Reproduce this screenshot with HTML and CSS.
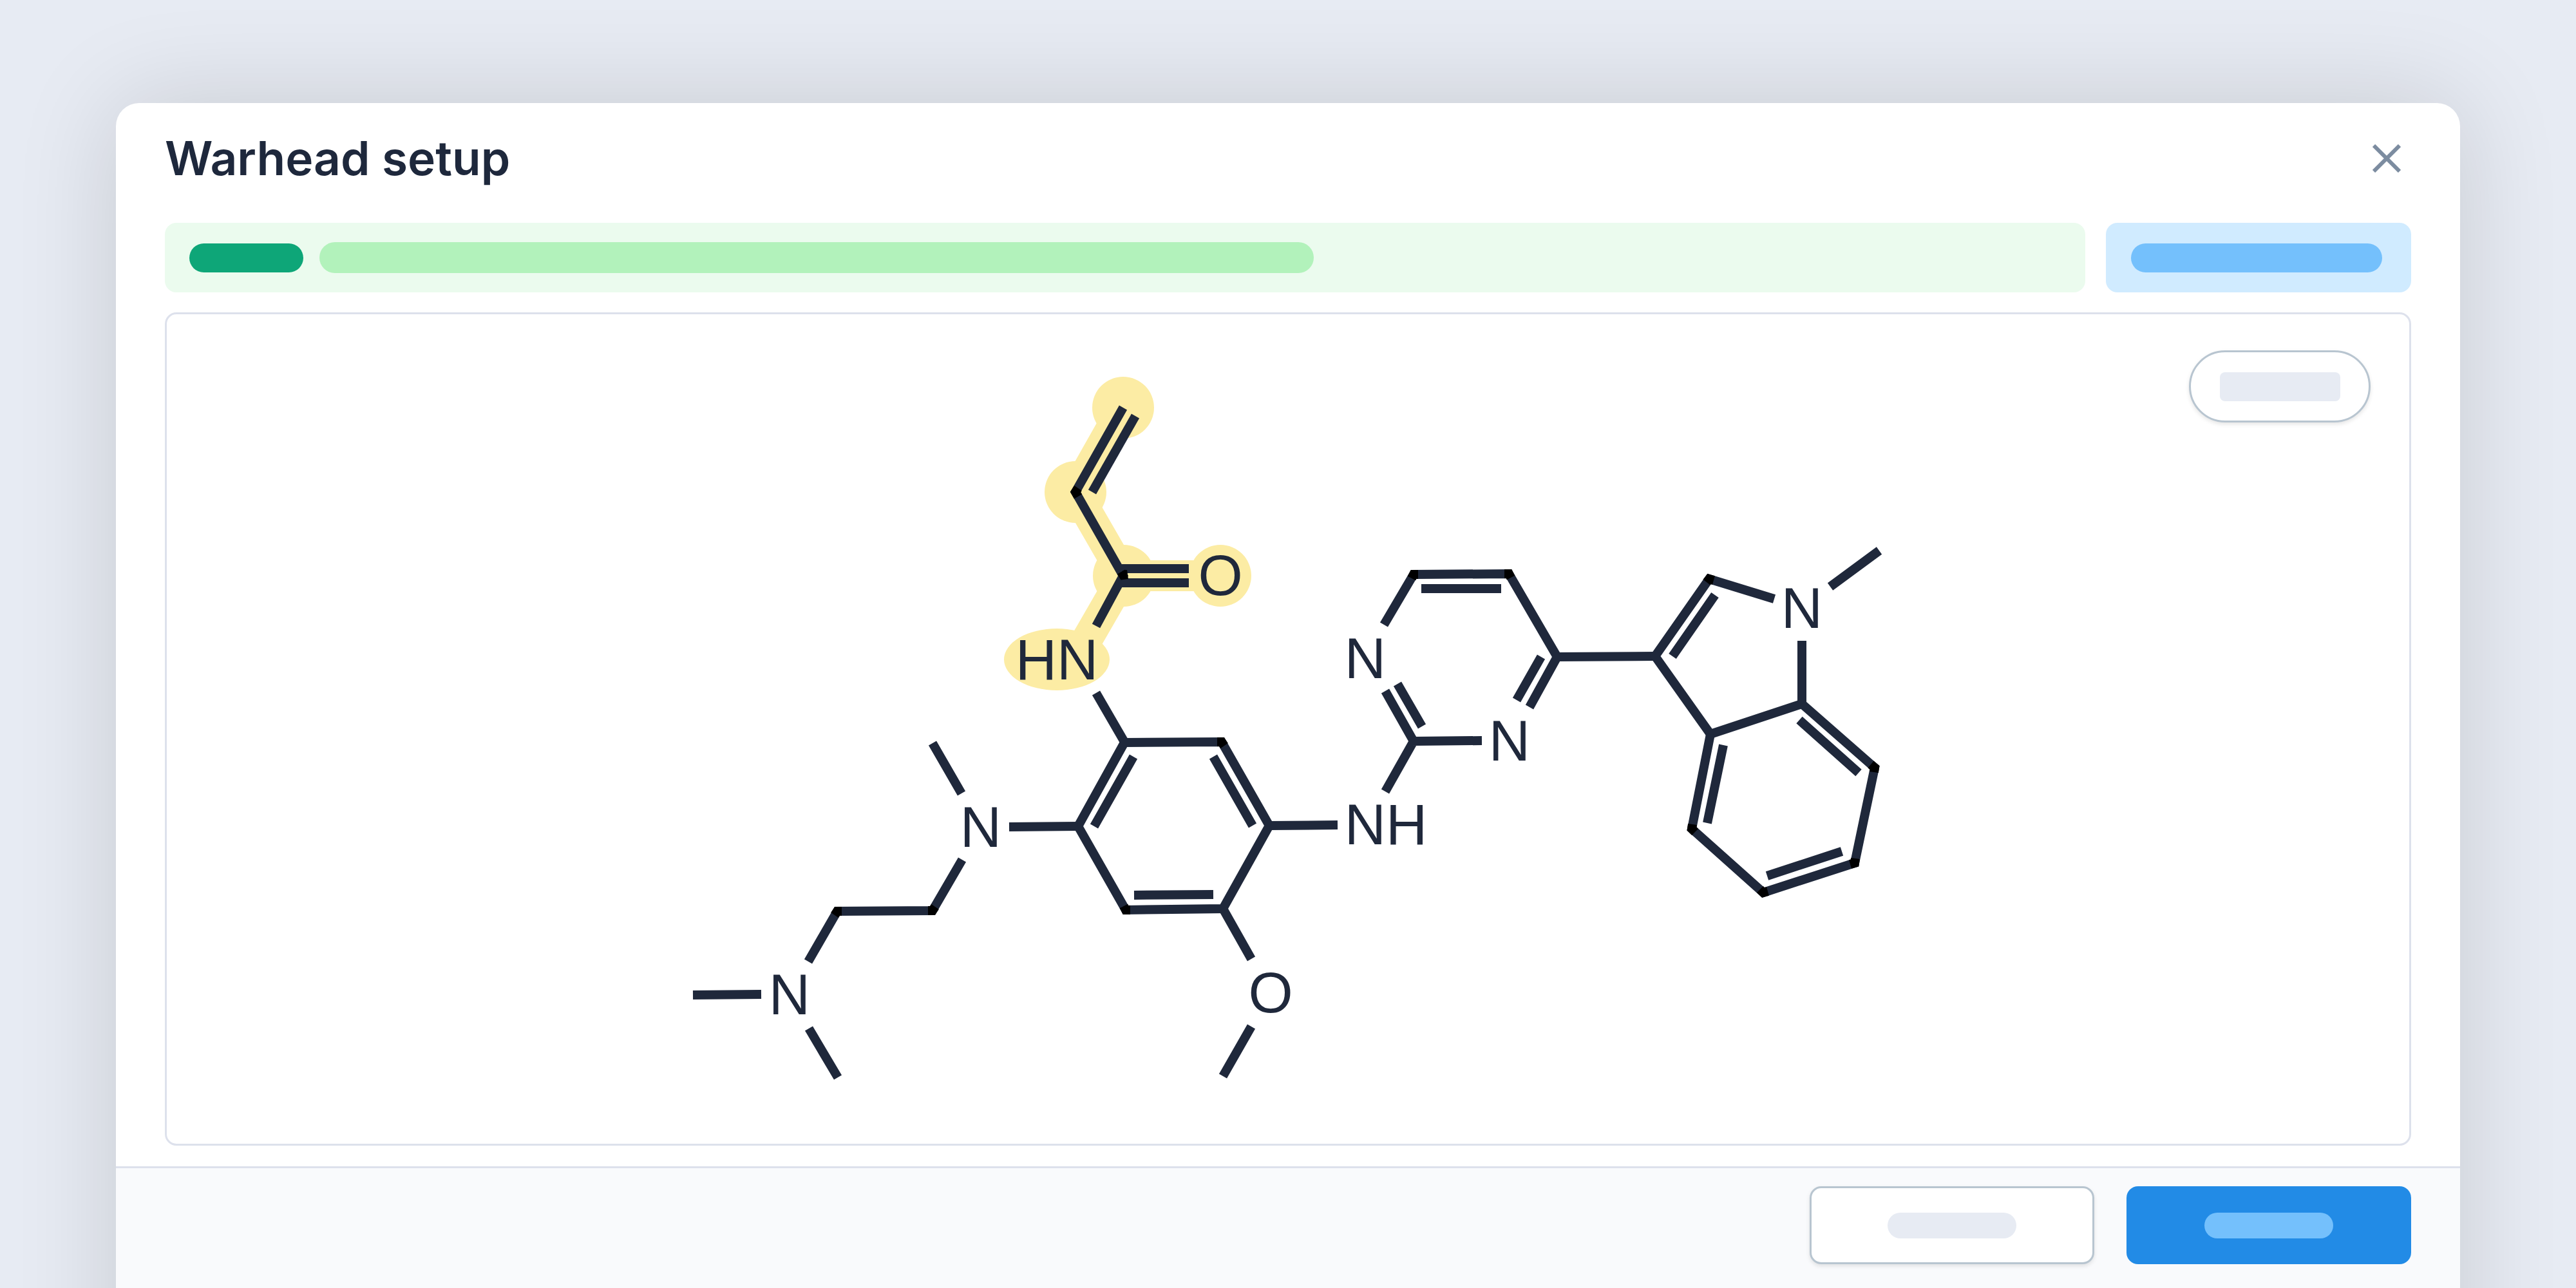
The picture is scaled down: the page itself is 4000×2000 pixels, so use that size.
FILE: index.html
```html
<!DOCTYPE html>
<html lang="en">
<head>
    <meta charset="UTF-8">
    <meta name="viewport" content="width=device-width, initial-scale=1.0">
    <title>Warhead setup</title>
    <link rel="stylesheet" href="styles.css">
</head>
<body>

<div class="modal" role="dialog" aria-labelledby="modalTitle">
    <div class="modal-body">
        <!-- Header -->
        <header class="modal-header">
            <h1 id="modalTitle">Warhead setup</h1>
            <button type="button" class="close" aria-label="Close">
                <svg viewBox="0 0 44 44" width="44" height="44">
                    <path d="M2 2L42 42M42 2L2 42" fill="none" stroke="currentColor" stroke-width="6"/>
                </svg>
            </button>
        </header>

        <!-- Status -->
        <div class="status-row">
            <div class="status">
                <span class="bar bar-tag"></span>
                <span class="bar bar-message"></span>
            </div>
            <div class="status-info">
                <span class="bar bar-info"></span>
            </div>
        </div>

        <!-- Molecule -->
        <div class="viewer">
            <svg class="molecule" viewBox="259 488 3482 1288" role="img" aria-label="Molecule with the warhead highlighted">
                <!-- Warhead highlight -->
                <g class="highlight">
                    <path d="M1744 633L1670 764L1745 894L1670 1024M1745 894H1895"/>
                    <circle cx="1744" cy="633" r="48"/>
                    <circle cx="1670" cy="764" r="48"/>
                    <circle cx="1745" cy="894" r="48"/>
                    <circle cx="1895" cy="894" r="48"/>
                    <ellipse cx="1641" cy="1024" rx="82" ry="48"/>
                </g>

                <g class="bonds">
                    <!-- Acrylamide -->
                    <path d="M1744 633L1670 764L1744 894L1702 972"/>
                    <path d="M1763 646L1696 764"/>
                    <path d="M1742 883H1846M1742 905H1846"/>
                    <path d="M1702 1076L1746 1152"/>
                    <!-- Central ring -->
                    <path d="M1746 1153L1897 1152L1971 1282L1899 1411L1748 1413L1674 1283Z"/>
                    <path d="M1760 1175L1699 1283M1884 1175L1945 1282M1761 1390L1884 1389"/>
                    <path d="M1971 1282L2077 1281M1899 1411L1943 1489M1943 1594L1899 1671"/>
                    <!-- Diamine chain -->
                    <path d="M1674 1283L1567 1284M1448 1154L1493 1232"/>
                    <path d="M1494 1335L1448 1414L1300 1415L1255 1493"/>
                    <path d="M1076 1545L1182 1544M1256 1597L1301 1673"/>
                    <!-- Pyrimidine -->
                    <path d="M2149 970L2195 892L2343 891L2418 1020L2375 1098"/>
                    <path d="M2207 914H2331M2393 1020L2355 1087M2170 1062L2208 1128"/>
                    <path d="M2151 1073L2195 1151L2301 1150M2195 1151L2151 1229"/>
                    <path d="M2418 1020L2570 1019"/>
                    <!-- Indole -->
                    <path d="M2755 930L2654 899L2570 1019L2656 1140L2798 1093V995"/>
                    <path d="M2663 924L2597 1019M2842 911L2918 855"/>
                    <path d="M2798 1093L2911 1192L2880 1340L2738 1386L2627 1287L2656 1140"/>
                    <path d="M2794 1118L2886 1200M2860 1322L2744 1360M2651 1278L2676 1157"/>
                </g>

                <g class="joints">
                    <path d="M1674 758L1670 764L1674 771"/>
                    <path d="M1741 888L1744 893L1751 892"/>
                    <path d="M1890 1152H1897L1901 1158"/>
                    <path d="M1745 1407L1748 1413H1755"/>
                    <path d="M1296 1421L1300 1415H1307"/>
                    <path d="M1441 1414H1448L1452 1408"/>
                    <path d="M2192 898L2195 892H2202"/>
                    <path d="M2336 891H2343L2346 897"/>
                    <path d="M2661 901L2654 899L2650 904"/>
                    <path d="M2905 1187L2911 1192L2910 1199"/>
                    <path d="M2881 1333L2880 1340L2873 1342"/>
                    <path d="M2745 1384L2738 1386L2733 1381"/>
                    <path d="M2632 1292L2627 1287L2628 1280"/>
                </g>

                <g class="atoms">
                    <text x="1895" y="924">O</text>
                    <text x="1641" y="1055">HN</text>
                    <text x="1523" y="1315">N</text>
                    <text x="1226" y="1575">N</text>
                    <text x="1973" y="1572">O</text>
                    <text x="2152" y="1311">NH</text>
                    <text x="2120" y="1053">N</text>
                    <text x="2344" y="1181">N</text>
                    <text x="2798" y="975">N</text>
                </g>
            </svg>
            <button type="button" class="viewer-action" aria-label="Viewer options">
                <span class="bar bar-chip"></span>
            </button>
        </div>
    </div>

    <!-- Footer -->
    <footer class="modal-footer">
        <button type="button" class="btn" aria-label="Cancel"><span class="bar bar-label"></span></button>
        <button type="button" class="btn btn-primary" aria-label="Continue"><span class="bar bar-label"></span></button>
    </footer>
</div>

</body>
</html>
```
FILE: styles.css
```css
* {
    box-sizing: border-box;
}
body {
    height: 100vh;
    margin: 0;
    padding: 160px 180px 0;
    overflow: hidden;
    background-color: #e7ebf3;
    color: #1e283c;
    font-family: Inter, sans-serif;
}
button {
    display: flex;
    align-items: center;
    justify-content: center;
    padding: 0;
    cursor: pointer;
}

/* Modal */
.modal {
    border-radius: 36px;
    background-color: #fff;
    box-shadow: 0 0 160px rgba(0, 0, 0, 0.14);
}
.modal-body {
    padding: 0 76px 32px;
}
.modal-header {
    display: flex;
    align-items: center;
    justify-content: space-between;
    height: 186px;
    padding-bottom: 14px;
}
h1 {
    margin: 0;
    font-size: 73px;
    font-weight: 600;
    line-height: 96px;
}
.close {
    width: 76px;
    height: 76px;
    border: none;
    background: none;
    color: #7c8ca0;
}

/* Placeholder bars */
.bar {
    display: block;
    height: 45px;
    border-radius: 24px;
}
.bar-tag {
    width: 177px;
    background-color: #0ea678;
}
.bar-message {
    width: 1544px;
    height: 48px;
    background-color: #b2f2bb;
}
.bar-info {
    width: 100%;
    background-color: #74c0fc;
}
.bar-chip {
    width: 187px;
    border-radius: 8px;
    background-color: #e7ebf3;
}
.bar-label {
    width: 200px;
    height: 40px;
    background-color: #e7ebf3;
}

.status-row {
    display: flex;
    gap: 32px;
    margin-bottom: 31px;
}
.status, .status-info {
    display: flex;
    align-items: center;
    height: 108px;
    border-radius: 18px;
}
.status {
    flex: 1;
    gap: 25px;
    padding: 0 38px;
    background-color: #ebfbee;
}
.status-info {
    width: 474px;
    padding: 0 45px 0 39px;
    background-color: #d0ebff;
}

/* Molecule viewer */
.viewer {
    position: relative;
    border: 3px solid #dde1ec;
    border-radius: 18px;
}
.molecule {
    display: block;
    width: 100%;
}
.highlight {
    fill: #fceca4;
}
.highlight path {
    fill: none;
    stroke: #fceca4;
    stroke-width: 48;
}
.bonds, .joints {
    fill: none;
    stroke: #1f283b;
    stroke-width: 14;
}
.joints {
    stroke: #000;
}
.atoms {
    fill: #1f283b;
    font-family: "Liberation Sans", sans-serif;
    font-size: 89px;
    text-anchor: middle;
}
.viewer-action {
    position: absolute;
    top: 56px;
    right: 60px;
    width: 282px;
    height: 112px;
    border: 3px solid #b8c5d0;
    border-radius: 56px;
    background-color: #fff;
    box-shadow: 0 3px 6px rgba(0, 0, 0, 0.1);
}

/* Footer */
.modal-footer {
    display: flex;
    justify-content: flex-end;
    gap: 50px;
    padding: 28px 76px 240px;
    border-top: 3px solid #dde1ec;
    background-color: #f9fafc;
}
.btn {
    width: 442px;
    height: 121px;
    border: 3px solid #b8c5d0;
    border-radius: 18px;
    background-color: #fff;
    box-shadow: 0 3px 6px rgba(0, 0, 0, 0.1);
}
.btn-primary {
    border: none;
    background-color: #228be6;
    box-shadow: none;
}
.btn-primary .bar {
    background-color: #74c0fc;
}
```
